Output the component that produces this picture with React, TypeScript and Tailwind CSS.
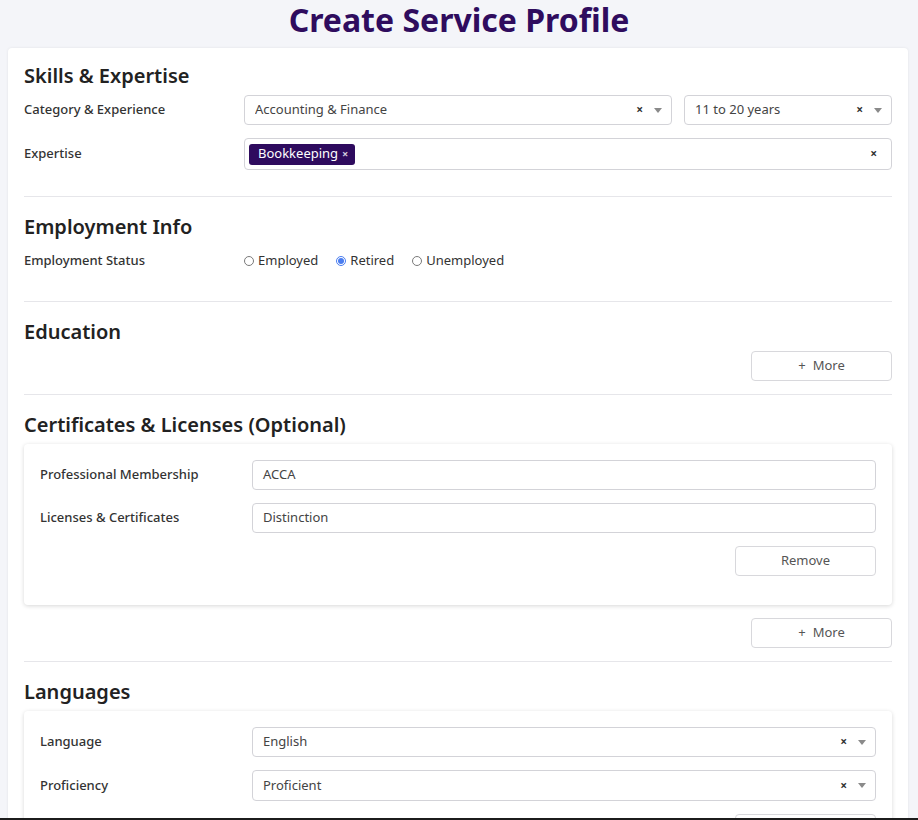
import type { ReactNode } from 'react';

function Clear({ className = '' }: { className?: string }) {
  return <span className={`text-[12px] font-bold leading-none text-[#333] ${className}`}>×</span>;
}

function Caret() {
  return (
    <svg width="8" height="5" viewBox="0 0 8 5" className="ml-[11px]" aria-hidden>
      <path d="M0 0h8L4 5z" fill="#8a8a8a" />
    </svg>
  );
}

function Select({ value, className = '' }: { value: string; className?: string }) {
  return (
    <div
      className={`flex h-[30px] items-center rounded border border-[#d3d3d8] bg-white pl-[10px] pr-[9px] text-[13px] text-[#444] ${className}`}
    >
      <span className="flex-1 truncate">{value}</span>
      <Clear />
      <Caret />
    </div>
  );
}

function TextInput({ value }: { value: string }) {
  return (
    <div className="flex h-[30px] flex-1 items-center rounded border border-[#d3d3d8] bg-white px-[10px] text-[13px] text-[#444]">
      {value}
    </div>
  );
}

function Row({ label, children, inner = false }: { label: string; children: ReactNode; inner?: boolean }) {
  return (
    <div className="mb-[13px] flex items-center">
      <div className={`${inner ? 'w-[212px]' : 'w-[220px]'} shrink-0 text-[13px] font-medium text-[#333]`}>
        {label}
      </div>
      <div className="flex min-w-0 flex-1 items-center gap-3">{children}</div>
    </div>
  );
}

function Radio({ label, checked = false }: { label: string; checked?: boolean }) {
  return (
    <label className="mr-[18px] flex items-center text-[13px] text-[#333]">
      {checked ? (
        <span className="mr-[4px] flex h-[10px] w-[10px] items-center justify-center rounded-full border border-[#4a7df0] bg-white">
          <span className="h-[6px] w-[6px] rounded-full bg-[#4a7df0]" />
        </span>
      ) : (
        <span className="mr-[4px] h-[10px] w-[10px] rounded-full border border-[#7a7a7a] bg-white" />
      )}
      {label}
    </label>
  );
}

function OutlineButton({ children }: { children: ReactNode }) {
  return (
    <div className="flex justify-end">
      <button
        type="button"
        className="flex h-[30px] w-[141px] items-center justify-center rounded border border-[#d8d8dc] bg-white text-[13px] text-[#555]"
      >
        {children}
      </button>
    </div>
  );
}

function Section({ title, children, first = false }: { title: string; children?: ReactNode; first?: boolean }) {
  return (
    <section className={`${first ? '' : 'border-t border-[#e6e6ea] pt-4'} pb-[13px]`}>
      <h2 className="mb-[5px] text-[20px] font-semibold leading-[28px] text-[#222]">{title}</h2>
      {children}
    </section>
  );
}

function InnerCard({ children }: { children: ReactNode }) {
  return (
    <div className="mb-[13px] rounded bg-white px-4 pt-4 pb-4 shadow-[0_1px_4px_rgba(0,0,0,0.16)]">
      {children}
    </div>
  );
}

export default function App() {
  return (
    <div className="min-h-screen bg-[#f4f5f9] pb-10 font-['Noto_Sans','Open_Sans',sans-serif]">
      <h1 className="text-center text-[32px] font-bold leading-[40px] text-[#2f0c5e]">Create Service Profile</h1>
      <div className="ml-2 mr-[10px] mt-2 rounded bg-white px-4 pt-[14px] shadow-[0_0_3px_rgba(0,0,0,0.08)]">
        <Section title="Skills & Expertise" first>
          <Row label="Category & Experience">
            <Select value="Accounting & Finance" className="flex-1" />
            <Select value="11 to 20 years" className="w-[208px]" />
          </Row>
          <Row label="Expertise">
            <div className="flex h-[32px] flex-1 items-center rounded border border-[#d3d3d8] bg-white pl-[4px] pr-[14px]">
              <span className="flex h-[21px] items-center rounded-[3px] bg-[#2e0b5e] pl-[9px] pr-[7px] text-[13px] text-white">
                Bookkeeping
                <span className="ml-[4px] text-[11px] font-bold text-[#cfc8dc]">×</span>
              </span>
              <span className="flex-1" />
              <Clear />
            </div>
          </Row>
        </Section>

        <Section title="Employment Info">
          <div className="mb-[13px] flex h-[29px] items-center">
            <div className="w-[220px] shrink-0 text-[13px] font-medium text-[#333]">Employment Status</div>
            <Radio label="Employed" />
            <Radio label="Retired" checked />
            <Radio label="Unemployed" />
          </div>
        </Section>

        <Section title="Education">
          <OutlineButton>
            <span className="mr-[7px]">+</span>More
          </OutlineButton>
        </Section>

        <Section title="Certificates & Licenses (Optional)">
          <InnerCard>
            <Row label="Professional Membership" inner>
              <TextInput value="ACCA" />
            </Row>
            <Row label="Licenses & Certificates" inner>
              <TextInput value="Distinction" />
            </Row>
            <div className="mb-[13px]">
              <OutlineButton>Remove</OutlineButton>
            </div>
          </InnerCard>
          <OutlineButton>
            <span className="mr-[7px]">+</span>More
          </OutlineButton>
        </Section>

        <Section title="Languages">
          <InnerCard>
            <Row label="Language" inner>
              <Select value="English" className="flex-1" />
            </Row>
            <Row label="Proficiency" inner>
              <Select value="Proficient" className="h-[31px] flex-1" />
            </Row>
            <div className="mb-[13px]">
              <OutlineButton>Remove</OutlineButton>
            </div>
          </InnerCard>
          <OutlineButton>
            <span className="mr-[7px]">+</span>More
          </OutlineButton>
        </Section>
      </div>
      <div className="fixed inset-x-0 bottom-0 h-[2px] bg-[#1c1c1c]" />
    </div>
  );
}
